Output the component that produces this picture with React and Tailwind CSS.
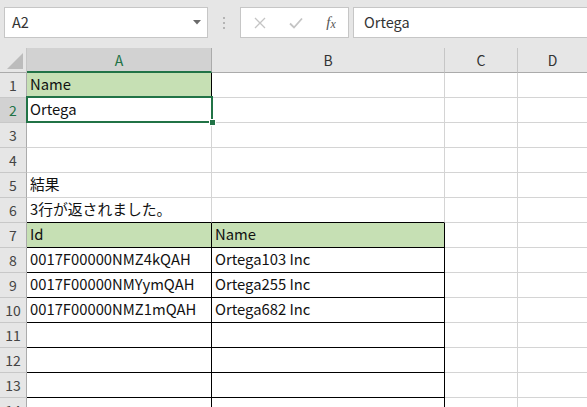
import React from "react";

function RowHeader({ n, selected }) {
  return (
    <div
      className={
        selected
          ? "w-[27px] shrink-0 h-full border-r border-b border-r-[#ababab] border-b-[#c8c8c8] bg-[#d2d2d2] text-[#217346] flex items-center justify-center text-[14px] leading-none"
          : "w-[27px] shrink-0 h-full border-r border-b border-r-[#ababab] border-b-[#c8c8c8] bg-[#e6e6e6] text-[#444444] flex items-center justify-center text-[14px] leading-none"
      }
    >
      {n}
    </div>
  );
}

const A_GRID = "w-[185px] shrink-0 h-full border-r border-b border-[#d4d4d4] flex items-end overflow-hidden";
const A_TABLE = "w-[185px] shrink-0 h-full border-r border-b border-black flex items-end overflow-hidden";
const A_SEL = "w-[185px] shrink-0 h-full border-r border-b border-black flex items-end relative";
const A_TABLE_FILL = "w-[185px] shrink-0 h-full border-r border-b border-black bg-[#c6e0b4] flex items-end overflow-hidden";
const A_BOTTOM_BLACK = "w-[185px] shrink-0 h-full border-r border-b border-r-[#d4d4d4] border-b-black flex items-end overflow-hidden";
const B_GRID = "w-[233px] shrink-0 h-full border-r border-b border-[#d4d4d4] flex items-end overflow-hidden";
const B_TABLE = "w-[233px] shrink-0 h-full border-r border-b border-black flex items-end overflow-hidden";
const B_TABLE_FILL = "w-[233px] shrink-0 h-full border-r border-b border-black bg-[#c6e0b4] flex items-end overflow-hidden";
const B_BOTTOM_BLACK = "w-[233px] shrink-0 h-full border-r border-b border-r-[#d4d4d4] border-b-black flex items-end overflow-hidden";

const TXT = "pl-[3px] pb-[3px] whitespace-nowrap text-[14.8px] leading-[20px] text-[#111111]";

const rows = [
  { n: 1, a: "Name", aCls: A_TABLE_FILL, bCls: B_GRID },
  { n: 2, a: "Ortega", aCls: A_SEL, bCls: B_GRID, sel: true },
  { n: 3, a: "", aCls: A_GRID, bCls: B_GRID },
  { n: 4, a: "", aCls: A_GRID, bCls: B_GRID },
  { n: 5, a: "結果", aCls: A_GRID, bCls: B_GRID },
  { n: 6, a: "3行が返されました。", aCls: A_BOTTOM_BLACK, bCls: B_BOTTOM_BLACK },
  { n: 7, a: "Id", b: "Name", aCls: A_TABLE_FILL, bCls: B_TABLE_FILL },
  { n: 8, a: "0017F00000NMZ4kQAH", b: "Ortega103 Inc", aCls: A_TABLE, bCls: B_TABLE },
  { n: 9, a: "0017F00000NMYymQAH", b: "Ortega255 Inc", aCls: A_TABLE, bCls: B_TABLE },
  { n: 10, a: "0017F00000NMZ1mQAH", b: "Ortega682 Inc", aCls: A_TABLE, bCls: B_TABLE },
  { n: 11, a: "", aCls: A_TABLE, bCls: B_TABLE },
  { n: 12, a: "", aCls: A_TABLE, bCls: B_TABLE },
  { n: 13, a: "", aCls: A_TABLE, bCls: B_TABLE },
  { n: 14, a: "", aCls: A_TABLE, bCls: B_TABLE },
];

export default function App() {
  return (
    <div className="w-[587px] h-[407px] overflow-hidden bg-white font-['Noto_Sans_CJK_JP','Noto_Sans',sans-serif]">
      {/* Formula bar */}
      <div className="h-[48px] bg-[#e6e6e6] flex items-start pt-[7px]">
        <div className="ml-[4px] w-[204px] h-[31px] shrink-0 bg-white border border-[#c6c6c6] flex items-center justify-between pl-[7px] pr-[6px]">
          <span className="text-[14.5px] text-[#333333] leading-none">A2</span>
          <svg width="8" height="5" viewBox="0 0 8 5" className="mb-[1px]">
            <path d="M0 0 H8 L4 4.5 Z" fill="#6a6a6a" />
          </svg>
        </div>
        <div className="w-[32px] h-[31px] shrink-0 flex flex-col items-center justify-center gap-[3px]">
          <span className="w-[2px] h-[2px] bg-[#b4b4b4]" />
          <span className="w-[2px] h-[2px] bg-[#b4b4b4]" />
          <span className="w-[2px] h-[2px] bg-[#b4b4b4]" />
        </div>
        <div className="w-[109px] h-[31px] shrink-0 bg-white border border-[#c6c6c6] flex items-center">
          <div className="w-[36px] flex justify-center ml-[1px]">
            <svg width="12" height="12" viewBox="0 0 12 12">
              <path d="M1 1 L11 11 M11 1 L1 11" stroke="#c4c4c4" strokeWidth="1.3" fill="none" />
            </svg>
          </div>
          <div className="w-[36px] flex justify-center">
            <svg width="14" height="12" viewBox="0 0 14 12">
              <path d="M1 6.5 L5 10.5 L13 1.5" stroke="#c4c4c4" strokeWidth="1.8" fill="none" />
            </svg>
          </div>
          <div className="w-[34px] flex justify-center">
            <span className="font-['Liberation_Serif',serif] italic text-[15px] text-[#555555] leading-none">
              f<span className="text-[12px] relative top-[1px]">x</span>
            </span>
          </div>
        </div>
        <div className="ml-[4px] flex-1 h-[31px] bg-white border border-[#c6c6c6] border-r-0 flex items-center pl-[10px]">
          <span className="text-[14.5px] text-[#333333] leading-none">Ortega</span>
        </div>
      </div>

      {/* Column headers */}
      <div className="flex h-[25px]">
        <div className="w-[27px] shrink-0 h-full bg-[#e6e6e6] border-r border-b border-r-[#c6c6c6] border-b-[#ababab] relative">
          <svg width="20" height="18" viewBox="0 0 20 18" className="absolute left-[6px] top-[5px]">
            <path d="M1 16 L17 16 L17 0 Z" fill="#bcbcbc" />
          </svg>
        </div>
        <div className="w-[185px] shrink-0 h-full bg-[#d2d2d2] border-r border-r-[#ababab] border-b-2 border-b-[#217346] flex items-center justify-center text-[14px] text-[#217346] leading-none">
          A
        </div>
        <div className="w-[233px] shrink-0 h-full bg-[#e6e6e6] border-r border-b border-r-[#c6c6c6] border-b-[#ababab] flex items-center justify-center text-[14px] text-[#333333] leading-none">
          B
        </div>
        <div className="w-[73px] shrink-0 h-full bg-[#e6e6e6] border-r border-b border-r-[#c6c6c6] border-b-[#ababab] flex items-center justify-center text-[14px] text-[#333333] leading-none">
          C
        </div>
        <div className="w-[70px] shrink-0 h-full bg-[#e6e6e6] border-r border-b border-r-[#c6c6c6] border-b-[#ababab] flex items-center justify-center text-[14px] text-[#333333] leading-none">
          D
        </div>
        <div className="flex-1 h-full bg-[#e6e6e6] border-b border-b-[#ababab]" />
      </div>

      {/* Rows */}
      {rows.map((r) => (
        <div key={r.n} className="flex h-[25px]">
          <RowHeader n={r.n} selected={r.sel} />
          <div className={r.aCls}>
            <span className={TXT}>{r.a}</span>
            {r.sel && (
              <div className="absolute left-[-1px] top-[-2px] w-[187px] h-[27px] border-2 border-[#217346] z-10 pointer-events-none">
                <div className="absolute left-[181px] top-[21px] w-[7px] h-[7px] bg-[#217346] border border-white" />
              </div>
            )}
          </div>
          <div className={r.bCls}>
            <span className={TXT}>{r.b || ""}</span>
          </div>
          <div className="w-[73px] shrink-0 h-full border-r border-b border-[#d4d4d4]" />
          <div className="w-[70px] shrink-0 h-full border-r border-b border-[#d4d4d4]" />
          <div className="flex-1 h-full border-b border-[#d4d4d4]" />
        </div>
      ))}
    </div>
  );
}
